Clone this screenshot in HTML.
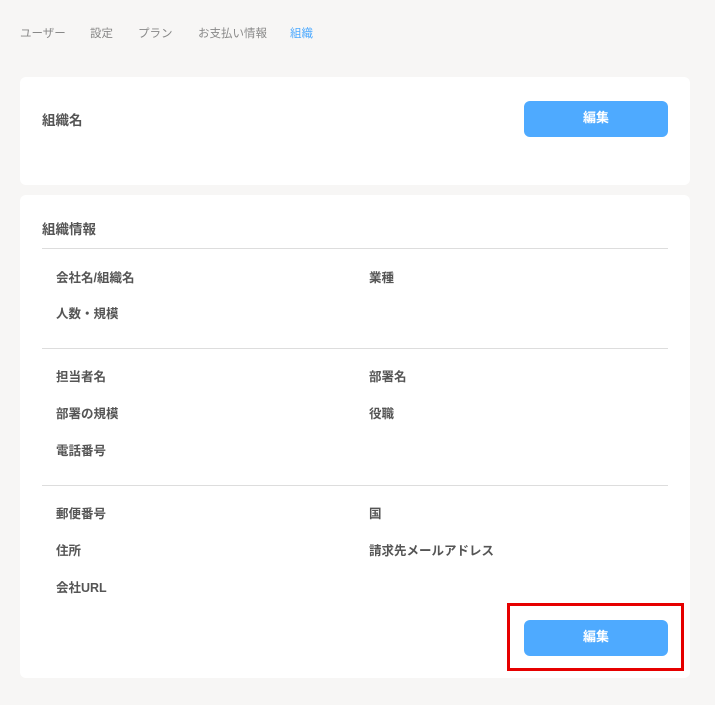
<!DOCTYPE html>
<html><head><meta charset="utf-8"><style>
body{margin:0;width:715px;height:705px;background:#f7f6f5;font-family:"Liberation Sans","Noto Sans CJK JP",sans-serif;position:relative;overflow:hidden}
.a{position:absolute;white-space:nowrap}
.nav{top:25px;font-size:11.5px;color:#888}
.card{position:absolute;left:20px;width:670px;background:#fff;border-radius:6px}
.btn{position:absolute;width:144px;height:36px;background:#4eaaff;border-radius:6px;color:#fff;font-weight:bold;font-size:13px;text-align:center;line-height:34px}
.l{font-size:12.5px;font-weight:bold;color:#555}
.t{font-size:13.5px;font-weight:bold;color:#555}
.hr{position:absolute;left:42px;width:626px;height:1px;background:#ddd}
</style></head><body>
<div class="a nav" style="left:20px">ユーザー</div>
<div class="a nav" style="left:90px">設定</div>
<div class="a nav" style="left:138px">プラン</div>
<div class="a nav" style="left:198px">お支払い情報</div>
<div class="a nav" style="left:290px;color:#4eaaff">組織</div>
<div class="card" style="top:77px;height:108px"></div>
<div class="a t" style="left:42px;top:109px">組織名</div>
<div class="btn" style="left:524px;top:101px">編集</div>
<div class="card" style="top:195px;height:483px"></div>
<div class="a t" style="left:42px;top:218px">組織情報</div>
<div class="hr" style="top:248px"></div>
<div class="a l" style="left:56px;top:267px">会社名/組織名</div>
<div class="a l" style="left:369px;top:267px">業種</div>
<div class="a l" style="left:56px;top:303px">人数・規模</div>
<div class="hr" style="top:348px"></div>
<div class="a l" style="left:56px;top:366px">担当者名</div>
<div class="a l" style="left:369px;top:366px">部署名</div>
<div class="a l" style="left:56px;top:403px">部署の規模</div>
<div class="a l" style="left:369px;top:403px">役職</div>
<div class="a l" style="left:56px;top:440px">電話番号</div>
<div class="hr" style="top:485px"></div>
<div class="a l" style="left:56px;top:503px">郵便番号</div>
<div class="a l" style="left:369px;top:503px">国</div>
<div class="a l" style="left:56px;top:540px">住所</div>
<div class="a l" style="left:369px;top:540px">請求先メールアドレス</div>
<div class="a l" style="left:56px;top:577px">会社URL</div>
<div class="btn" style="left:524px;top:620px">編集</div>
<div style="position:absolute;left:507px;top:603px;width:171px;height:62px;border:3px solid #e60000"></div>
</body></html>
